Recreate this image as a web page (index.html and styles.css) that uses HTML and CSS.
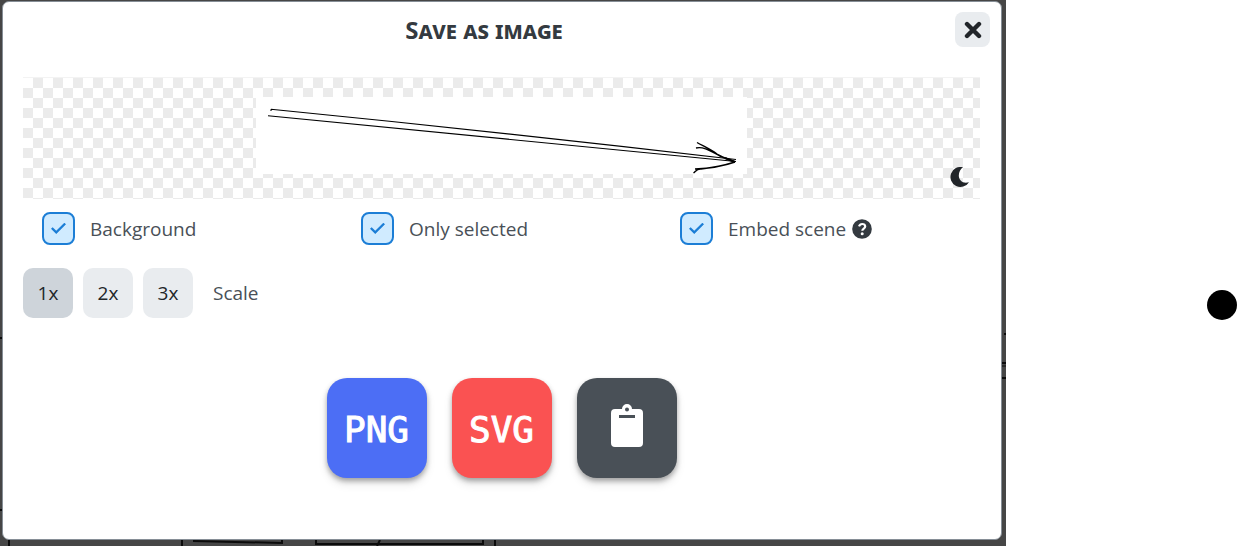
FILE: index.html
```html
<!DOCTYPE html>
<html lang="en">
<head>
<meta charset="utf-8">
<title>Save as image</title>
<link rel="stylesheet" href="styles.css">
</head>
<body>
<div class="app">
  <svg class="canvas" aria-hidden="true">
    <g fill="none" stroke="#0b0b0b" stroke-width="2">
      <path d="M0 338H3M0 510H3M9 540V546M182 540V546M495 540V546M193 541L282 543V540M316 540V544H483V540M380 540L377 546M1004 334H1006M1002 363H1006M1002 378H1006"/>
      <path stroke-width="1" d="M1002 366H1006"/>
    </g>
  </svg>
  <main class="modal" role="dialog" aria-labelledby="title">
    <header class="head">
      <h1 class="title" id="title">Save as image</h1>
      <button class="close" type="button" aria-label="Close">
        <svg width="18" height="18" viewBox="0 0 18 18"><path d="M3 3L15 15M15 3L3 15" stroke="#212529" stroke-width="4.4" stroke-linecap="round"/></svg>
      </button>
    </header>
    <section class="preview">
      <svg class="drawing" viewBox="256 97 491 77" role="img" aria-label="Arrow">
        <g fill="none" stroke="#000" stroke-width="1.1">
          <path d="M271 109.300Q500 132 736 159.500M268 115.700Q500 138 736 161.500M271 109.300V111"/>
          <path stroke-width="1.400" d="M697 142.500C703 146 710 149 717 154Q726 159 735 162M696 148C704 146 712 152 720 156L735 162M693.500 173C696 171 697 168.500 701 169Q719 167 735 162M695 169Q718 168 735 162"/>
          <path stroke-width="2.400" d="M725 158L735 162"/>
        </g>
      </svg>
      <button class="theme" type="button" aria-label="Dark mode">
        <svg width="20" height="20" viewBox="0 0 20 20"><path fill="#212529" d="M13 .3A10 10 0 1 0 19 15.200C13 17 8.800 13.500 8.800 8.500C8.800 5 10.500 2 13 .3Z"/></svg>
      </button>
    </section>
    <div class="options">
      <label class="option"><input class="check" type="checkbox" checked>Background</label>
      <label class="option"><input class="check" type="checkbox" checked>Only selected</label>
      <label class="option"><input class="check" type="checkbox" checked>Embed scene
        <svg class="help" width="20" height="20" viewBox="0 0 20 20" aria-hidden="true"><circle cx="10" cy="10" r="9.800" fill="#343a40"/><path d="M7 7.300C7.700 5.600 8.900 5 10.200 5C12 5 13.200 6 13.200 7.500C13.200 9.600 10.300 9.500 10.300 11.700" fill="none" stroke="#fff" stroke-width="2.200"/><circle cx="10.200" cy="14.700" r="1.500" fill="#fff"/></svg>
      </label>
    </div>
    <div class="scales">
      <button class="scale active" type="button">1x</button>
      <button class="scale" type="button">2x</button>
      <button class="scale" type="button">3x</button>
      <span class="caption">Scale</span>
    </div>
    <div class="exports">
      <button class="export png" type="button">PNG</button>
      <button class="export svg" type="button">SVG</button>
      <button class="export clip" type="button" aria-label="Copy to clipboard">
        <svg width="32" height="43" viewBox="0 0 32 43"><path fill="#fff" fill-rule="evenodd" d="M4 5H11A5 5 0 0 1 21 5H28A4 4 0 0 1 32 9V39A4 4 0 0 1 28 43H4A4 4 0 0 1 0 39V9A4 4 0 0 1 4 5ZM16 3.500A2 2 0 1 0 16 7.500A2 2 0 0 0 16 3.500ZM8 11V14H24V11Z"/></svg>
      </button>
    </div>
  </main>
</div>
<aside class="side"><div class="dot"></div></aside>
</body>
</html>
```
FILE: styles.css
```css
* { box-sizing: border-box; }
body {
  margin: 0;
  min-height: 100vh;
  display: flex;
  background: #fff;
  color: #495057;
  font: 19px/28px "Open Sans", "Noto Sans", sans-serif;
}
button { border: 0; padding: 0; font: inherit; }
button svg { display: block; }
.app {
  position: relative;
  flex: 1;
  display: flex;
  padding: 1px 4px 6px 2px;
  background: #464646;
  overflow: hidden;
}
.canvas { position: absolute; inset: 0; width: 100%; height: 100%; }
.modal {
  position: relative;
  flex: 1;
  padding: 10px 21px 20px 20px;
  background: #fff;
  border: 1px solid #868e96;
  border-radius: 7px;
}
.head {
  display: flex;
  align-items: flex-start;
  gap: 10px;
  margin-right: -10px;
}
.title {
  flex: 1;
  margin: 0;
  text-align: center;
  color: #343a40;
  font: 700 24px/36px "Noto Sans", sans-serif;
  font-variant: small-caps;
}
.close {
  width: 35px;
  height: 35px;
  display: grid;
  place-items: center;
  background: #e9ecef;
  border-radius: 8px;
}
.preview {
  position: relative;
  display: flex;
  justify-content: center;
  margin-top: 29px;
  padding: 19px 0 25px;
  border-top: 1px solid #f3f3f3;
  background: repeating-conic-gradient(#ebebeb 0 25%, #fff 0 50%) 0 0 / 20px 20px;
}
.drawing { width: 491px; max-width: 100%; background: #fff; }
.theme { position: absolute; right: 10px; bottom: 12px; background: none; }
.options {
  display: grid;
  grid-template-columns: repeat(3, 1fr);
  margin-top: 13px;
}
.option {
  display: flex;
  align-items: center;
  padding-left: 19px;
  white-space: nowrap;
}
.check {
  appearance: none;
  width: 33px;
  height: 33px;
  margin: 0 15px 0 0;
  display: grid;
  place-items: center;
  background: #d0ebff;
  border: 2px solid #1c7ed6;
  border-radius: 8px;
}
.check:checked::before {
  content: "";
  width: 15px;
  height: 12px;
  background: #1c7ed6;
  clip-path: polygon(0 53%, 11% 40%, 35% 68%, 89% 2%, 100% 14%, 35% 96%);
}
.help { margin-left: 6px; }
.scales {
  display: flex;
  align-items: center;
  gap: 10px;
  margin-top: 23px;
}
.scale {
  width: 50px;
  height: 50px;
  background: #e9ecef;
  border-radius: 10px;
  color: #212529;
}
.scale.active { background: #ced4da; }
.caption { margin-left: 10px; }
.exports {
  display: flex;
  justify-content: center;
  gap: 25px;
  margin-top: 60px;
}
.export {
  width: 100px;
  height: 100px;
  display: grid;
  place-items: center;
  border-radius: 20px;
  color: #fff;
  font: 36px/40px "DejaVu Sans Mono", monospace;
  -webkit-text-stroke: 1px #fff;
  box-shadow: 0 3px 5px rgba(0, 0, 0, .3), 0 6px 10px rgba(0, 0, 0, .1);
}
.png, .svg { padding-top: 4px; }
.png { background: #4c6ef5; }
.svg { background: #fa5252; }
.clip { background: #495057; }
.clip svg { margin-bottom: 6px; }
.side {
  flex: 0 0 232px;
  display: flex;
  justify-content: flex-end;
  align-items: flex-start;
  padding: 290px 1px 0 0;
}
.dot { width: 30px; height: 30px; border-radius: 50%; background: #000; }
```
